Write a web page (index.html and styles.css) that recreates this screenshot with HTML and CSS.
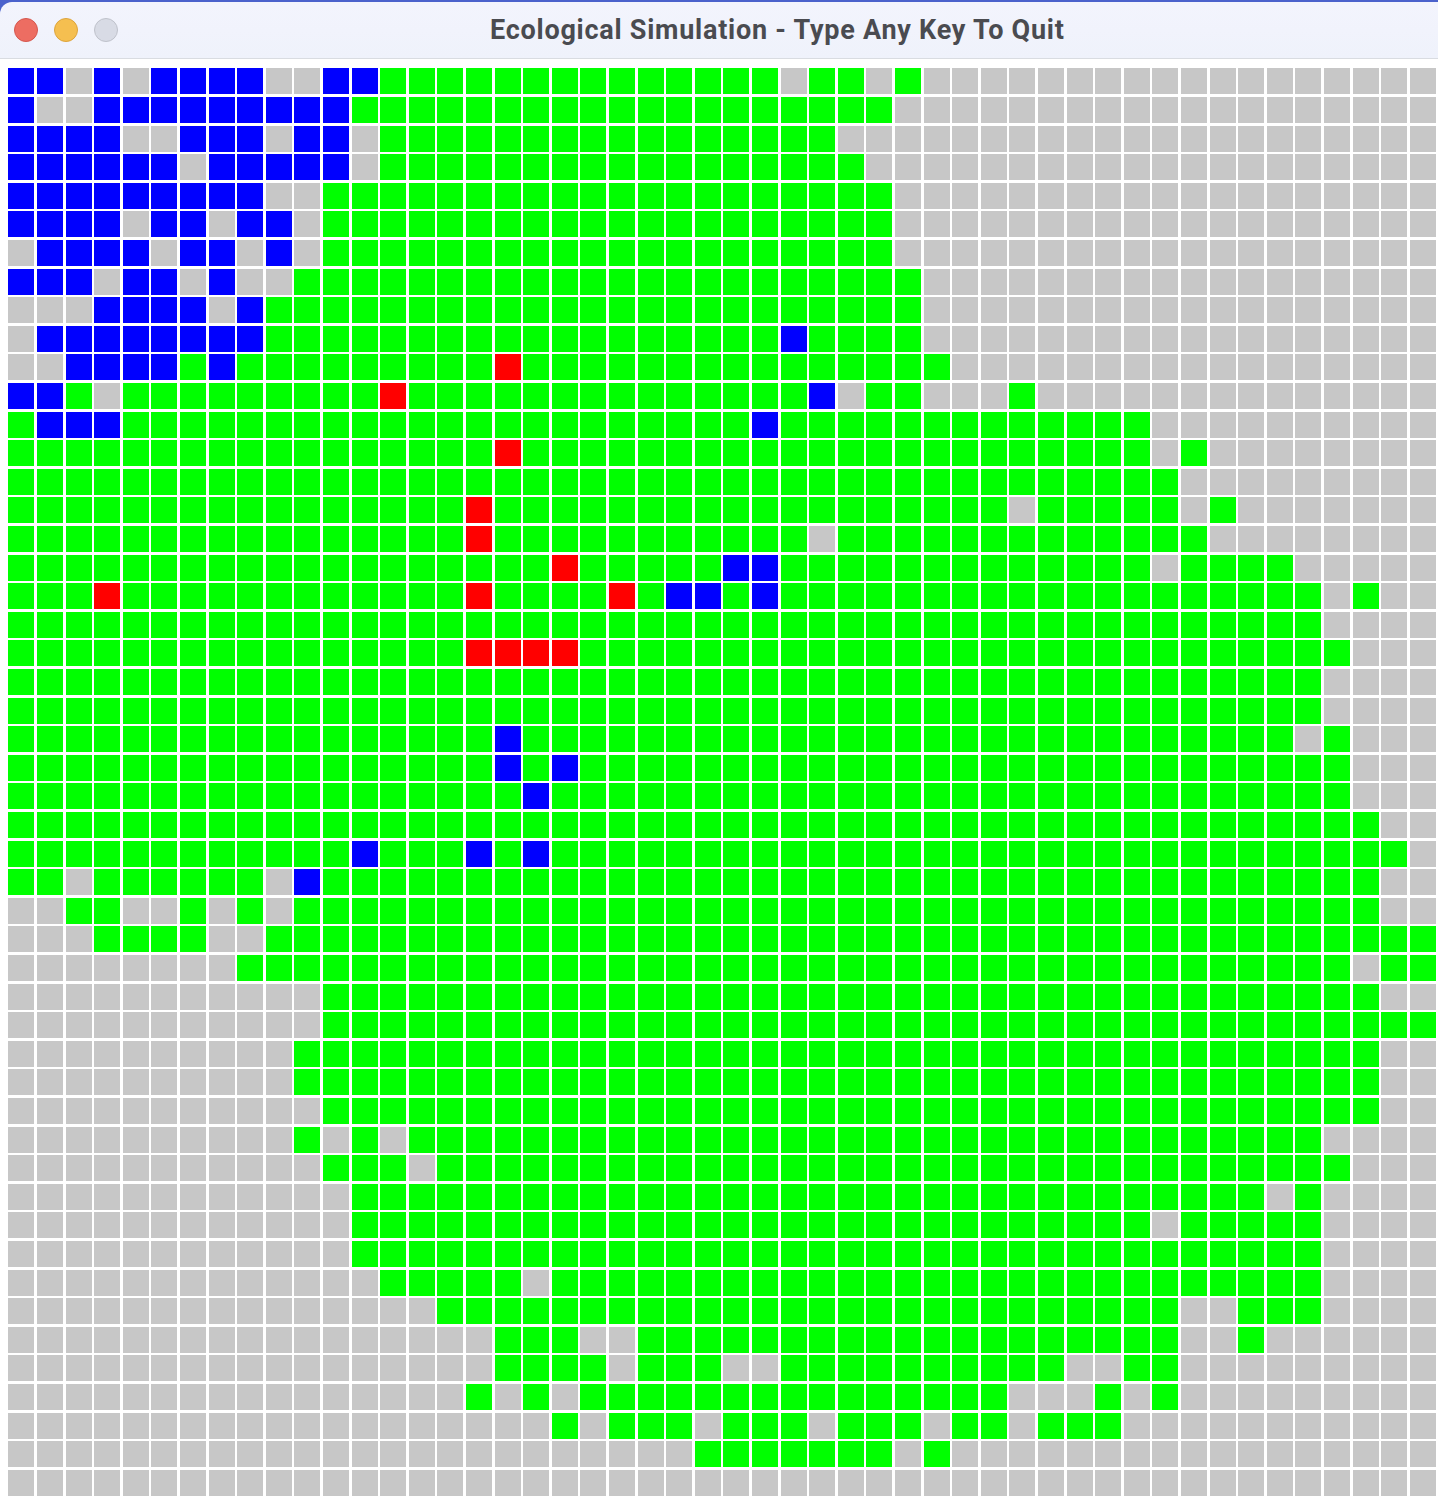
FILE: index.html
```html
<!DOCTYPE html>
<html lang="en">
<head>
    <meta charset="UTF-8">
    <meta name="viewport" content="width=device-width, initial-scale=1.0">
    <title>Ecological Simulation</title>
    <link rel="stylesheet" href="styles.css">
</head>
<body>
    <div class="frame">
        <div class="titlebar">
            <div class="lights">
                <span class="light close"></span>
                <span class="light minimize"></span>
                <span class="light zoom"></span>
            </div>
            <div class="title">Ecological Simulation - Type Any Key To Quit</div>
        </div>
    </div>
    <div class="board" id="board"></div>
    <script src="grid.js"></script>
</body>
</html>
```

FILE: styles.css
```css
body {
    margin: 0;
    background-color: white;
    overflow: hidden;
}
.frame {
    background-color: #4b62cc;
    padding-top: 2px;
}
.titlebar {
    display: flex;
    align-items: center;
    height: 56px;
    padding-left: 14px;
    background: linear-gradient(#f3f4fd, #eff2fb);
    border-bottom: 1px solid #d9dce1;
    border-top-left-radius: 12px;
}
.lights {
    display: flex;
    gap: 16px;
}
.light {
    width: 22px;
    height: 22px;
    border-radius: 50%;
    border: 1px solid;
}
.close {
    background-color: #ed6d62;
    border-color: #d5574e;
}
.minimize {
    background-color: #f5bf50;
    border-color: #dda43c;
}
.zoom {
    background-color: #d8dbe5;
    border-color: #bfc2cb;
}
.title {
    margin-left: 372px;
    margin-bottom: 1px;
    font-family: Roboto, sans-serif;
    font-size: 27px;
    font-weight: 700;
    letter-spacing: 0.75px;
    color: #4a4b50;
    white-space: nowrap;
}
/* cells are 26px, the pitch works out to 28.6px so it repeats every 5 tracks */
.board {
    display: grid;
    grid-template-columns: repeat(10, 29px 29px 28px 29px 28px);
    grid-template-rows: repeat(10, 29px 29px 28px 29px 28px);
    padding: 9px 0 0 8px;
}
.board div {
    width: 26px;
    height: 26px;
}
.empty {
    background-color: #c7c7c7;
}
.grass {
    background-color: #00ff00;
}
.prey {
    background-color: #0000ff;
}
.predator {
    background-color: #ff0000;
}
```

FILE: grid.js
```js
// one line per row, five blocks of ten cells
// . empty, G grass, B prey, R predator
const rows = [
    "BB.B.BBBB. .BBGGGGGGG GGGGGGG.GG .G........ ..........",
    "B..BBBBBBB BBGGGGGGGG GGGGGGGGGG G......... ..........",
    "BBBB..BBB. BB.GGGGGGG GGGGGGGGG. .......... ..........",
    "BBBBBB.BBB BB.GGGGGGG GGGGGGGGGG .......... ..........",
    "BBBBBBBBB. .GGGGGGGGG GGGGGGGGGG G......... ..........",
    "BBBB.BB.BB .GGGGGGGGG GGGGGGGGGG G......... ..........",
    ".BBBB.BB.B .GGGGGGGGG GGGGGGGGGG G......... ..........",
    "BBB.BB.B.. GGGGGGGGGG GGGGGGGGGG GG........ ..........",
    "...BBBB.BG GGGGGGGGGG GGGGGGGGGG GG........ ..........",
    ".BBBBBBBBG GGGGGGGGGG GGGGGGGBGG GG........ ..........",
    "..BBBBGBGG GGGGGGGRGG GGGGGGGGGG GGG....... ..........",
    "BBG.GGGGGG GGGRGGGGGG GGGGGGGGB. GG...G.... ..........",
    "GBBBGGGGGG GGGGGGGGGG GGGGGGBGGG GGGGGGGGGG ..........",
    "GGGGGGGGGG GGGGGGGRGG GGGGGGGGGG GGGGGGGGGG .G........",
    "GGGGGGGGGG GGGGGGGGGG GGGGGGGGGG GGGGGGGGGG G.........",
    "GGGGGGGGGG GGGGGGRGGG GGGGGGGGGG GGGGG.GGGG G.G.......",
    "GGGGGGGGGG GGGGGGRGGG GGGGGGGG.G GGGGGGGGGG GG........",
    "GGGGGGGGGG GGGGGGGGGR GGGGGBBGGG GGGGGGGGGG .GGGG.....",
    "GGGRGGGGGG GGGGGGRGGG GRGBBGBGGG GGGGGGGGGG GGGGGG.G..",
    "GGGGGGGGGG GGGGGGGGGG GGGGGGGGGG GGGGGGGGGG GGGGGG....",
    "GGGGGGGGGG GGGGGGRRRR GGGGGGGGGG GGGGGGGGGG GGGGGGG...",
    "GGGGGGGGGG GGGGGGGGGG GGGGGGGGGG GGGGGGGGGG GGGGGG....",
    "GGGGGGGGGG GGGGGGGGGG GGGGGGGGGG GGGGGGGGGG GGGGGG....",
    "GGGGGGGGGG GGGGGGGBGG GGGGGGGGGG GGGGGGGGGG GGGGG.G...",
    "GGGGGGGGGG GGGGGGGBGB GGGGGGGGGG GGGGGGGGGG GGGGGGG...",
    "GGGGGGGGGG GGGGGGGGBG GGGGGGGGGG GGGGGGGGGG GGGGGGG...",
    "GGGGGGGGGG GGGGGGGGGG GGGGGGGGGG GGGGGGGGGG GGGGGGGG..",
    "GGGGGGGGGG GGBGGGBGBG GGGGGGGGGG GGGGGGGGGG GGGGGGGGG.",
    "GG.GGGGGG. BGGGGGGGGG GGGGGGGGGG GGGGGGGGGG GGGGGGGG..",
    "..GG..G.G. GGGGGGGGGG GGGGGGGGGG GGGGGGGGGG GGGGGGGG..",
    "...GGGG..G GGGGGGGGGG GGGGGGGGGG GGGGGGGGGG GGGGGGGGGG",
    "........GG GGGGGGGGGG GGGGGGGGGG GGGGGGGGGG GGGGGGG.GG",
    ".......... .GGGGGGGGG GGGGGGGGGG GGGGGGGGGG GGGGGGGG..",
    ".......... .GGGGGGGGG GGGGGGGGGG GGGGGGGGGG GGGGGGGGGG",
    ".......... GGGGGGGGGG GGGGGGGGGG GGGGGGGGGG GGGGGGGG..",
    ".......... GGGGGGGGGG GGGGGGGGGG GGGGGGGGGG GGGGGGGG..",
    ".......... .GGGGGGGGG GGGGGGGGGG GGGGGGGGGG GGGGGGGG..",
    ".......... G.G.GGGGGG GGGGGGGGGG GGGGGGGGGG GGGGGG....",
    ".......... .GGG.GGGGG GGGGGGGGGG GGGGGGGGGG GGGGGGG...",
    ".......... ..GGGGGGGG GGGGGGGGGG GGGGGGGGGG GGGG.G....",
    ".......... ..GGGGGGGG GGGGGGGGGG GGGGGGGGGG .GGGGG....",
    ".......... ..GGGGGGGG GGGGGGGGGG GGGGGGGGGG GGGGGG....",
    ".......... ...GGGGG.G GGGGGGGGGG GGGGGGGGGG GGGGGG....",
    ".......... .....GGGGG GGGGGGGGGG GGGGGGGGGG G..GGG....",
    ".......... .......GGG ..GGGGGGGG GGGGGGGGGG G..G......",
    ".......... .......GGG G.GGG..GGG GGGGGGG..G G.........",
    ".......... ......G.G. GGGGGGGGGG GGGGG...G. G.........",
    ".......... .........G .GGG.GGG.G GG.GG.GGG. ..........",
    ".......... .......... ....GGGGGG G.G....... ..........",
    ".......... .......... .......... .......... .........."
];

const kinds = { ".": "empty", G: "grass", B: "prey", R: "predator" };
const board = document.getElementById("board");

rows.forEach(function (row) {
    row.replace(/ /g, "").split("").forEach(function (cell) {
        const div = document.createElement("div");
        div.className = kinds[cell];
        board.appendChild(div);
    });
});
```
